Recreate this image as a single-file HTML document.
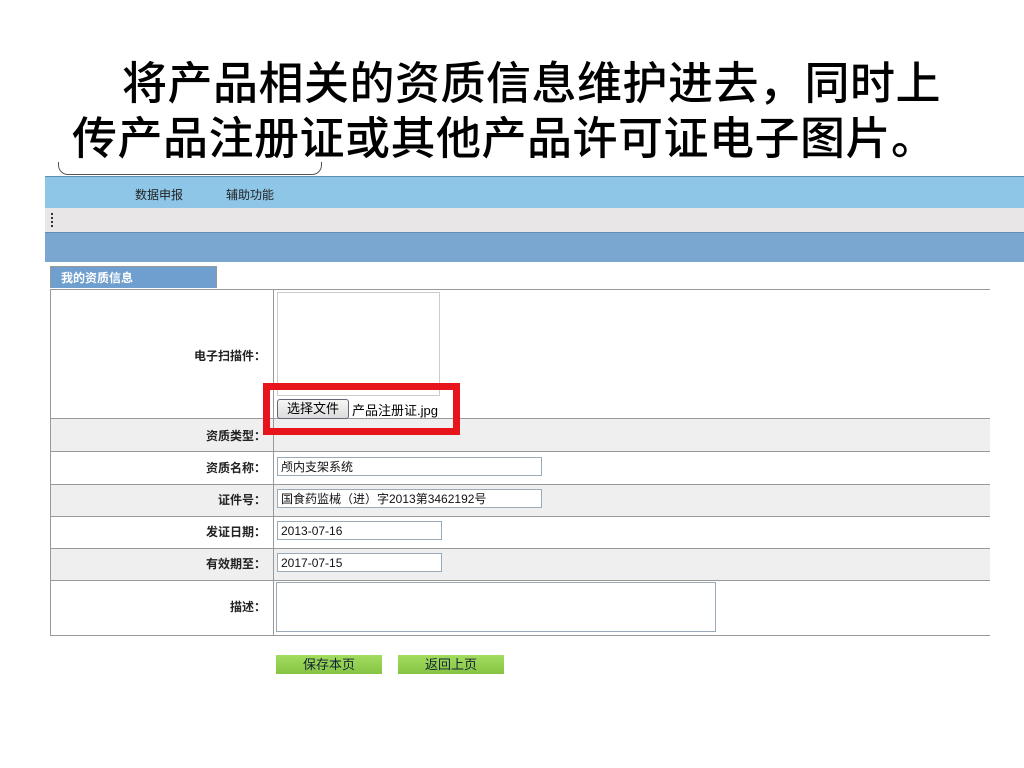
<!DOCTYPE html>
<html><head><meta charset="utf-8"><style>
body{margin:0;width:1024px;height:768px;background:#fff;position:relative;overflow:hidden;font-family:"Liberation Sans","Noto Sans CJK SC",sans-serif}
.a{position:absolute}
.t{font-size:45px;font-weight:500;color:#000;white-space:nowrap;letter-spacing:0.5px;font-family:"Noto Sans CJK SC",sans-serif;line-height:50px}
.lab{position:absolute;left:50px;width:216px;text-align:right;font-size:12px;font-weight:bold;color:#222}
.row{position:absolute;left:50px;width:940px;border-top:1px solid #999}
.in{position:absolute;left:277px;height:19px;border:1px solid #9ab;background:#fff;font-size:12px;line-height:19px;padding-left:3px;color:#111;box-sizing:border-box}
.btn{position:absolute;top:655px;width:106px;height:19px;background:linear-gradient(#a2dc60,#86c443);font-size:13px;text-align:center;line-height:19px;color:#123}
</style></head><body>
<div class="a" style="left:58px;top:162px;width:262px;height:12px;border:1px solid #555;border-top:none;border-radius:0 0 10px 10px;background:#fff"></div>
<div class="a t" style="left:122px;top:55px">将产品相关的资质信息维护进去，同时上</div>
<div class="a t" style="left:72px;top:110px">传产品注册证或其他产品许可证电子图片。</div>

<div class="a" style="left:45px;top:176px;width:979px;height:32px;background:#8ec6e8;border-top:1px solid #5d8fb5"></div>
<div class="a" style="left:135px;top:186px;font-size:12px;color:#222">数据申报</div>
<div class="a" style="left:226px;top:186px;font-size:12px;color:#222">辅助功能</div>
<div class="a" style="left:45px;top:208px;width:979px;height:24px;background:#e8e6e6;border-bottom:1px solid #5d8fb5"></div>
<div class="a" style="left:51px;top:213px;width:2px;height:14px;border-left:2px dotted #333"></div>
<div class="a" style="left:45px;top:233px;width:979px;height:29px;background:#7aa7cf"></div>
<div class="a" style="left:50px;top:266px;width:167px;height:22px;background:#6f9fcf;border:1px solid #999;border-bottom:none;color:#fff;font-size:12px;font-weight:bold;line-height:22px;padding-left:10px;box-sizing:border-box">我的资质信息</div>

<div class="a" style="left:50px;top:289px;width:940px;height:347px;border:1px solid #999;border-right:none;box-sizing:border-box"></div>
<div class="a" style="left:51px;top:418px;width:939px;height:33px;background:#efefef"></div>
<div class="a" style="left:51px;top:484px;width:939px;height:32px;background:#efefef"></div>
<div class="a" style="left:51px;top:548px;width:939px;height:32px;background:#efefef"></div>
<div class="row" style="top:418px"></div><div class="row" style="top:451px"></div><div class="row" style="top:484px"></div><div class="row" style="top:516px"></div><div class="row" style="top:548px"></div><div class="row" style="top:580px"></div>
<div class="a" style="left:273px;top:289px;width:1px;height:347px;background:#999"></div>

<div class="lab" style="top:347px">电子扫描件：</div>
<div class="lab" style="top:427px">资质类型：</div>
<div class="lab" style="top:459px">资质名称：</div>
<div class="lab" style="top:491px">证件号：</div>
<div class="lab" style="top:523px">发证日期：</div>
<div class="lab" style="top:555px">有效期至：</div>
<div class="lab" style="top:598px">描述：</div>

<div class="a" style="left:277px;top:292px;width:161px;height:102px;border:1px solid #ccc"></div>
<div class="a" style="left:277px;top:399px;width:70px;height:18px;border:1px solid #667;border-radius:3px;background:linear-gradient(#f6f6f6,#dcdcdc);font-size:13px;text-align:center;line-height:18px">选择文件</div>
<div class="a" style="left:352px;top:400px;font-size:13px">产品注册证.jpg</div>
<div class="a" style="left:263px;top:383px;width:197px;height:52px;border:7px solid #e8141c;box-sizing:border-box"></div>

<div class="in" style="top:457px;width:265px">颅内支架系统</div>
<div class="in" style="top:489px;width:265px">国食药监械（进）字2013第3462192号</div>
<div class="in" style="top:521px;width:165px">2013-07-16</div>
<div class="in" style="top:553px;width:165px">2017-07-15</div>
<div class="a" style="left:276px;top:582px;width:440px;height:50px;border:1px solid #9ab;box-sizing:border-box"></div>

<div class="btn" style="left:276px">保存本页</div>
<div class="btn" style="left:398px">返回上页</div>
</body></html>
